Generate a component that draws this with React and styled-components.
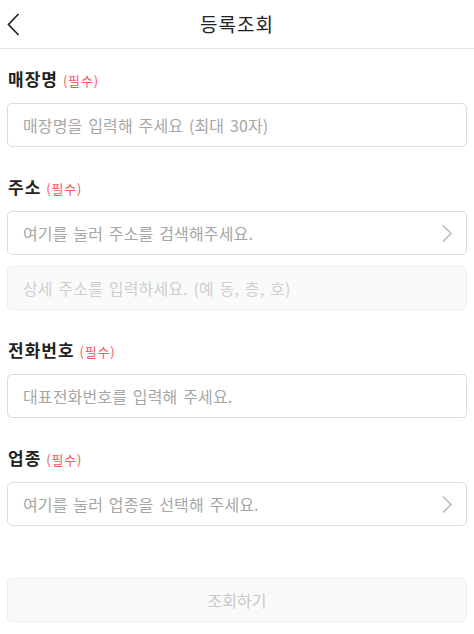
import React from "react";
import styled, { createGlobalStyle } from "styled-components";

const Global = createGlobalStyle`
  * { box-sizing: border-box; }
  html, body { margin: 0; padding: 0; background: #fff; }
  body { font-family: "Noto Sans CJK KR", "Noto Sans", sans-serif; color: #222; }
`;

const Page = styled.div`
  width: 474px;
  height: 634px;
  display: flex;
  flex-direction: column;
  background: #fff;
`;

const Header = styled.header`
  position: relative;
  height: 49px;
  border-bottom: 1px solid #e5e5e5;
  display: flex;
  align-items: center;
  justify-content: center;
`;

const BackButton = styled.button`
  position: absolute;
  left: 5px;
  top: 12px;
  width: 16px;
  height: 24px;
  padding: 0;
  border: 0;
  background: none;
  display: flex;
  align-items: center;
  justify-content: center;
`;

const Title = styled.h1`
  margin: 0 0 1px 0;
  font-size: 19px;
  font-weight: 400;
  color: #222;
  letter-spacing: 1px;
`;

const Form = styled.div`
  flex: 1;
  display: flex;
  flex-direction: column;
  padding: 18px 7px 0 7px;
`;

const Section = styled.section`
  display: flex;
  flex-direction: column;
  margin-bottom: 28px;
`;

const Label = styled.div`
  display: flex;
  align-items: baseline;
  height: 24px;
  line-height: 24px;
  padding-left: 1px;
  margin-bottom: 12px;
  font-size: 17px;
  font-weight: 700;
  letter-spacing: 1px;
  color: #222;
`;

const Required = styled.span`
  margin-left: 5px;
  font-size: 13px;
  font-weight: 400;
  letter-spacing: 0.8px;
  color: #f2565f;
`;

const Field = styled.div`
  height: 44px;
  border: 1px solid ${(p) => (p.$disabled ? "#eeeeee" : "#dcdcdc")};
  background: ${(p) => (p.$disabled ? "#fafafa" : "#fff")};
  border-radius: 5px;
  display: flex;
  align-items: center;
  justify-content: space-between;
  padding: 0 13px 0 15px;
  margin-top: ${(p) => p.$mt || 0}px;
`;

const Placeholder = styled.span`
  font-size: 16px;
  color: ${(p) => (p.$disabled ? "#cfcfcf" : "#a6a6a6")};
  letter-spacing: 0.15px;
  word-spacing: 2px;
`;

const Submit = styled.button`
  margin: 0 7px 12px 7px;
  height: 44px;
  border: 1px solid #eeeeee;
  background: #fafafa;
  border-radius: 5px;
  font-family: inherit;
  font-size: 16px;
  color: #c8c8c8;
`;

const Chevron = ({ color = "#bbb" }) => (
  <svg width="12" height="19" viewBox="0 0 12 19" fill="none">
    <path d="M2 1.5 L10 9.5 L2 17.5" stroke={color} strokeWidth="1.6" />
  </svg>
);

const BackIcon = () => (
  <svg width="13" height="23" viewBox="0 0 13 23" fill="none">
    <path d="M11.5 1 L1.5 11.5 L11.5 22" stroke="#222" strokeWidth="1.7" />
  </svg>
);

export default function App() {
  return (
    <>
      <Global />
      <Page>
        <Header>
          <BackButton aria-label="back">
            <BackIcon />
          </BackButton>
          <Title>등록조회</Title>
        </Header>
        <Form>
          <Section>
            <Label>
              매장명<Required>(필수)</Required>
            </Label>
            <Field>
              <Placeholder>매장명을 입력해 주세요 (최대 30자)</Placeholder>
            </Field>
          </Section>
          <Section>
            <Label>
              주소<Required>(필수)</Required>
            </Label>
            <Field>
              <Placeholder>여기를 눌러 주소를 검색해주세요.</Placeholder>
              <Chevron />
            </Field>
            <Field $disabled $mt={11}>
              <Placeholder $disabled>상세 주소를 입력하세요. (예 동, 층, 호)</Placeholder>
            </Field>
          </Section>
          <Section>
            <Label>
              전화번호<Required>(필수)</Required>
            </Label>
            <Field>
              <Placeholder>대표전화번호를 입력해 주세요.</Placeholder>
            </Field>
          </Section>
          <Section>
            <Label>
              업종<Required>(필수)</Required>
            </Label>
            <Field>
              <Placeholder>여기를 눌러 업종을 선택해 주세요.</Placeholder>
              <Chevron />
            </Field>
          </Section>
        </Form>
        <Submit>조회하기</Submit>
      </Page>
    </>
  );
}
